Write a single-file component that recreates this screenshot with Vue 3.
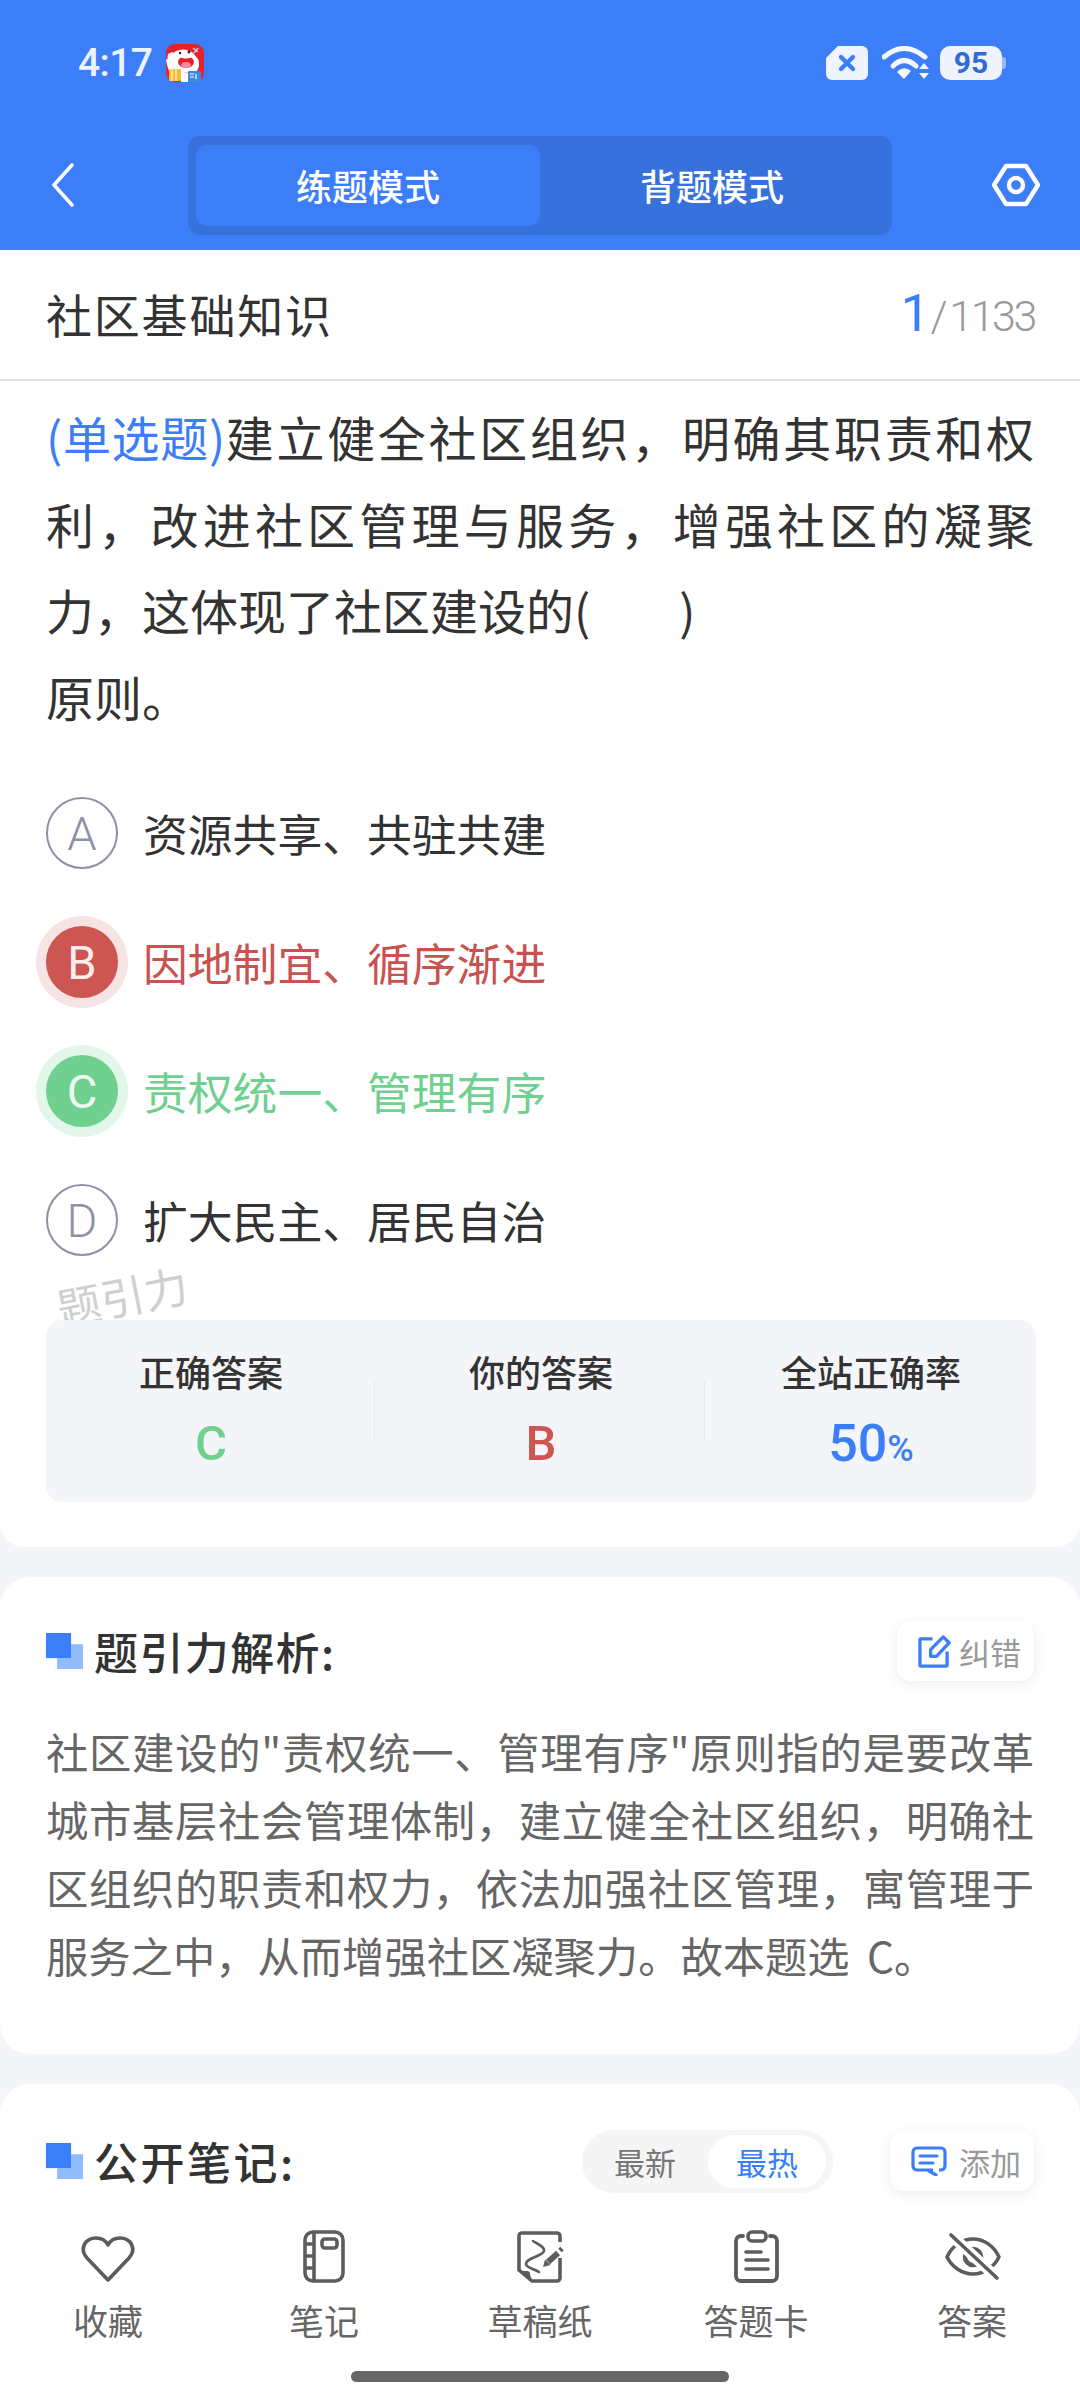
<template>
  <div class="screen">
    <div class="scroll">
      <header class="top">
        <div class="status">
          <div class="status__left">
            <span class="time">4:17</span>
            <svg class="app-icon" viewBox="0 0 38 38" aria-hidden="true">
              <rect width="38" height="38" rx="9" fill="#e8202c" />
              <path d="M0 16 L10 7 Q19 3 27 9 L32 15 Q35 22 30 28 L4 30 Q1 22 0 16Z" fill="#fff" />
              <path d="M2 10 Q8 6 11 11 Q9 18 5 21 Q0 17 2 10Z" fill="#fff" />
              <ellipse cx="20" cy="18" rx="8" ry="6" fill="#e8202c" />
              <ellipse cx="20" cy="21" rx="5" ry="3" fill="#f98aa0" />
              <ellipse cx="20" cy="12" rx="7" ry="2.4" fill="#fff" />
              <circle cx="14" cy="9" r="1.2" fill="#222" />
              <circle cx="23" cy="8" r="1.4" fill="#222" />
              <path d="M27 4 L32 8 M32 4 L28 9" stroke="#c9d4e8" stroke-width="1.4" />
              <rect x="3" y="25" width="12" height="12" rx="1" fill="#fbbc34" />
              <path d="M6 25 V37 M10 25 V37" stroke="#fff" stroke-width="1" />
              <rect x="15" y="29" width="7" height="9" fill="#fff" />
              <rect x="22" y="27" width="13" height="11" rx="1" fill="#3b8be0" />
              <path d="M24 30 H28 M24 33 H28 M30 30 V35" stroke="#fff" stroke-width="1.2" />
            </svg>
          </div>
          <div class="status__right">
            <svg class="sim" viewBox="0 0 44 34" aria-hidden="true">
              <path d="M13 0 H37 a6 6 0 0 1 6 6 V28 a6 6 0 0 1 -6 6 H7 a6 6 0 0 1 -6 -6 V12 Z" fill="#eef3fe" />
              <path d="M16 11 L28 23 M28 11 L16 23" stroke="#3b7ef8" stroke-width="4.4" stroke-linecap="round" />
            </svg>
            <svg class="wifi" viewBox="0 0 48 34" aria-hidden="true">
              <path d="M2 11 Q22 -6 43 11" fill="none" stroke="#f4f7ff" stroke-width="5" stroke-linecap="round" />
              <path d="M11 20 Q22 9 34 20" fill="none" stroke="#f4f7ff" stroke-width="5" stroke-linecap="round" />
              <path d="M15 26 Q22 19 29 25 L22 33 Z" fill="#f4f7ff" />
              <path d="M37 23 L42 17 L47 23 Z M37 27 H47 L42 33 Z" fill="#f4f7ff" />
            </svg>
            <div class="battery">
              <span class="battery__value">95</span>
              <i class="battery__tip"></i>
            </div>
          </div>
        </div>
        <nav class="nav">
          <svg class="nav__back" viewBox="0 0 24 44" aria-hidden="true">
            <path d="M21 2 L3 22 L21 42" fill="none" stroke="#fff" stroke-width="3.6" stroke-linecap="round" stroke-linejoin="round" />
          </svg>
          <div class="modes">
            <button class="mode mode--active">练题模式</button>
            <button class="mode">背题模式</button>
          </div>
          <svg class="nav__settings" viewBox="0 0 48 44" aria-hidden="true">
            <path d="M14 3 H34 L46 22 L34 41 H14 L2 22 Z" fill="none" stroke="#fff" stroke-width="4.4" stroke-linejoin="round" />
            <circle cx="24" cy="22" r="7" fill="none" stroke="#fff" stroke-width="4.4" />
          </svg>
        </nav>
      </header>

      <section class="card card--question">
        <div class="crumb">
          <span class="crumb__title">社区基础知识</span>
          <span class="crumb__count"><b>1</b><em>/</em>1133</span>
        </div>
        <p class="stem">
          <span class="stem__type">(单选题)</span>建立健全社区组织，明确其职责和权利，改进社区管理与服务，增强社区的凝聚力，这体现了社区建设的(&nbsp;&nbsp;&nbsp;&nbsp;&nbsp;&nbsp;&nbsp;&nbsp;&#8202;)<br />原则。
        </p>
        <ul class="options">
          <li
            v-for="opt in options"
            :key="opt.key"
            class="option"
            :class="opt.state ? 'option--' + opt.state : ''"
          >
            <span class="option__badge">{{ opt.key }}</span>
            <span class="option__text">{{ opt.text }}</span>
          </li>
        </ul>
        <span class="watermark">题引力</span>
        <div class="stats">
          <div class="stat">
            <span class="stat__label">正确答案</span>
            <span class="stat__value stat__value--green">C</span>
          </div>
          <div class="stat">
            <span class="stat__label">你的答案</span>
            <span class="stat__value stat__value--red">B</span>
          </div>
          <div class="stat">
            <span class="stat__label">全站正确率</span>
            <span class="stat__value stat__value--blue">50<small>%</small></span>
          </div>
        </div>
      </section>

      <section class="card card--analysis">
        <div class="head">
          <i class="head__mark"></i>
          <h3 class="head__title">题引力解析:</h3>
          <button class="chip">
            <svg class="chip__icon" viewBox="0 0 34 34" aria-hidden="true">
              <path d="M15 4 H3 a1 1 0 0 0 -1 1 V31 a1 1 0 0 0 1 1 H29 a1 1 0 0 0 1 -1 V17" fill="none" stroke="#3b7ef8" stroke-width="3.4" />
              <path d="M13 22 V15 L26 2 L32 8 L19 22 Z" fill="none" stroke="#3b7ef8" stroke-width="3.4" stroke-linejoin="round" />
            </svg>
            纠错
          </button>
        </div>
        <p class="analysis">社区建设的"责权统一、管理有序"原则指的是要改革城市基层社会管理体制，建立健全社区组织，明确社区组织的职责和权力，依法加强社区管理，寓管理于服务之中，从而增强社区凝聚力。故本题选 C。</p>
      </section>

      <section class="card card--notes">
        <div class="head">
          <i class="head__mark"></i>
          <h3 class="head__title">公开笔记:</h3>
          <div class="sort">
            <span class="sort__item">最新</span>
            <span class="sort__item sort__item--active">最热</span>
          </div>
          <button class="chip chip--add">
            <svg class="chip__icon chip__icon--add" viewBox="0 0 36 30" aria-hidden="true">
              <path d="M22 24 H6 a4 4 0 0 1 -4 -4 V6 a4 4 0 0 1 4 -4 H30 a4 4 0 0 1 4 4 V20 a4 4 0 0 1 -4 4 H28" fill="none" stroke="#3b7ef8" stroke-width="3.2" />
              <path d="M18 25 L25 29" fill="none" stroke="#3b7ef8" stroke-width="3.2" stroke-linecap="round" />
              <path d="M9 10 H26 M9 17 H22" fill="none" stroke="#3b7ef8" stroke-width="3.2" stroke-linecap="round" />
            </svg>
            添加
          </button>
        </div>
      </section>
    </div>

    <footer class="tabbar">
      <div class="tabbar__items">
        <div class="tab">
          <svg class="tab__icon" viewBox="0 0 64 56" aria-hidden="true">
            <path d="M32 51 L11 29 C3 20 9 9 20 9 C26 9 30 12 32 16 C34 12 38 9 44 9 C55 9 61 20 53 29 Z" fill="none" stroke="#5c5c5c" stroke-width="3.6" stroke-linejoin="round" />
          </svg>
          <span>收藏</span>
        </div>
        <div class="tab">
          <svg class="tab__icon" viewBox="0 0 64 56" aria-hidden="true">
            <rect x="13" y="3" width="38" height="49" rx="8" fill="none" stroke="#5c5c5c" stroke-width="3.6" />
            <path d="M22 3 V52 M13 15 H22 M13 27 H22 M13 39 H22" fill="none" stroke="#5c5c5c" stroke-width="3.6" />
            <rect x="30" y="10" width="15" height="9" rx="3" fill="none" stroke="#5c5c5c" stroke-width="3.6" />
          </svg>
          <span>笔记</span>
        </div>
        <div class="tab">
          <svg class="tab__icon" viewBox="0 0 64 56" aria-hidden="true">
            <path d="M52 13 V7 a3 3 0 0 0 -3 -3 H14 a3 3 0 0 0 -3 3 V41 L24 52 H49 a3 3 0 0 0 3 -3 V29" fill="none" stroke="#5c5c5c" stroke-width="3.6" />
            <path d="M10 42 H19 a3 3 0 0 1 3 3 L24 53 Z" fill="#5c5c5c" />
            <path d="M25 12 C30 15 37 18 36 22 C35 27 18 29 18 35 C18 39 27 40 31 43" fill="none" stroke="#5c5c5c" stroke-width="2.6" stroke-linecap="round" />
            <path d="M40 33 L50 24" fill="none" stroke="#5c5c5c" stroke-width="6" />
            <path d="M35 38 L37 30.5 L42.5 36 Z" fill="#5c5c5c" />
            <path d="M52 21.5 L54 19.5" fill="none" stroke="#5c5c5c" stroke-width="5" />
          </svg>
          <span>草稿纸</span>
        </div>
        <div class="tab">
          <svg class="tab__icon" viewBox="0 0 64 56" aria-hidden="true">
            <path d="M19 7 H17 a5 5 0 0 0 -5 5 V47 a5 5 0 0 0 5 5 H48 a5 5 0 0 0 5 -5 V12 a5 5 0 0 0 -5 -5 H46" fill="none" stroke="#5c5c5c" stroke-width="3.8" stroke-linecap="round" />
            <rect x="24" y="3" width="18" height="9" rx="4" fill="none" stroke="#5c5c5c" stroke-width="3.6" />
            <path d="M22 23 H37 M22 31 H44 M22 40 H44" fill="none" stroke="#5c5c5c" stroke-width="3.6" stroke-linecap="round" />
          </svg>
          <span>答题卡</span>
        </div>
        <div class="tab">
          <svg class="tab__icon" viewBox="0 0 64 56" aria-hidden="true">
            <path d="M7 28 C12 17 22 10 33 10 C44 10 54 17 59 28 C54 38 44 45 33 45 C22 45 12 38 7 28 Z" fill="none" stroke="#5c5c5c" stroke-width="3.6" stroke-linejoin="round" />
            <circle cx="33" cy="28" r="8" fill="none" stroke="#5c5c5c" stroke-width="4.6" />
            <path d="M11 6 L57 49" stroke="#fff" stroke-width="11" />
            <path d="M11 6 L57 49" stroke="#5c5c5c" stroke-width="3.6" stroke-linecap="round" />
          </svg>
          <span>答案</span>
        </div>
      </div>
      <i class="tabbar__home"></i>
    </footer>
  </div>
</template>

<script setup>
const options = [
  { key: 'A', text: '资源共享、共驻共建' },
  { key: 'B', text: '因地制宜、循序渐进', state: 'wrong' },
  { key: 'C', text: '责权统一、管理有序', state: 'right' },
  { key: 'D', text: '扩大民主、居民自治' }
]
</script>

<style>
html, body { margin: 0; padding: 0; background: #f4f5f8; }
</style>

<style scoped>
.screen { width: 1080px; height: 2400px; display: flex; flex-direction: column; overflow: hidden; background: #f4f5f8; font-family: "Noto Sans CJK SC", "Noto Sans", sans-serif; color: #333; }
.scroll { flex: 1; min-height: 0; overflow: hidden; display: flex; flex-direction: column; gap: 30px; }

/* header */
.top { background: #3b7ef8; height: 250px; margin-bottom: -30px; flex: none; }
.status { height: 136px; padding: 0 78px 0 78px; box-sizing: border-box; display: flex; justify-content: space-between; align-items: flex-start; }
.status__left { display: flex; align-items: center; gap: 14px; padding-top: 41px; }
.time { font-family: Roboto, sans-serif; font-size: 39px; line-height: 44px; font-weight: 500; letter-spacing: -0.6px; color: #edf3ff; }
.app-icon { width: 38px; height: 38px; }
.status__right { display: flex; align-items: center; padding-top: 46px; }
.sim { width: 44px; height: 34px; }
.wifi { width: 48px; height: 34px; margin-left: 13px; }
.battery { position: relative; width: 62px; height: 34px; margin-left: 10px; border-radius: 10px; background: #eef3fe; display: flex; align-items: center; justify-content: center; }
.battery__value { font-family: Roboto, sans-serif; font-size: 30px; font-weight: 700; color: #2f6bd6; line-height: 34px; }
.battery__tip { position: absolute; right: -4px; top: 11px; width: 4px; height: 12px; border-radius: 0 3px 3px 0; background: rgba(238, 243, 254, 0.5); }

.nav { display: flex; align-items: flex-start; height: 99px; }
.nav__back { width: 24px; height: 44px; margin: 27px 0 0 51px; }
.modes { width: 704px; height: 99px; margin-left: 113px; padding: 9px 8px; box-sizing: border-box; display: flex; background: #3671dc; border-radius: 12px; }
.mode { flex: none; width: 344px; border: 0; padding: 0; border-radius: 10px; background: transparent; color: #fff; font-family: inherit; font-size: 36px; font-weight: 500; line-height: 81px; }
.mode--active { background: #3b7ef8; }
.nav__settings { width: 48px; height: 44px; margin: 27px 0 0 100px; }

/* question card */
.card { background: #fff; flex: none; border-radius: 30px; }
.card--question { position: relative; height: 1297px; border-radius: 0 0 24px 24px; }
.crumb { height: 131px; box-sizing: border-box; border-bottom: 2px solid #e2e2e2; padding: 0 45px 3px 46px; display: flex; align-items: center; justify-content: space-between; }
.crumb__title { font-size: 46px; letter-spacing: 1.8px; line-height: 60px; color: #333; }
.crumb__count { font-family: Roboto, sans-serif; font-size: 43px; font-weight: 300; color: #999; display: flex; align-items: baseline; letter-spacing: -2.4px; }
.crumb__count b { font-size: 52px; font-weight: 400; color: #3b7ef8; margin-right: 3px; }
.crumb__count em { font-style: normal; margin-right: 4px; }

.stem { margin: 0; padding: 12px 46px 0; font-size: 48px; line-height: 86.6px; text-align: justify; color: #333; }
.stem__type { color: #3b7ef8; letter-spacing: -2px; }

.options { list-style: none; margin: 58px 0 0; padding: 0; display: flex; flex-direction: column; gap: 57px; }
.option { display: flex; align-items: center; padding-left: 46px; height: 72px; }
.option__badge { width: 72px; height: 72px; box-sizing: border-box; border: 2px solid #8e90a5; border-radius: 50%; display: flex; align-items: center; justify-content: center; font-family: Roboto, sans-serif; font-size: 47px; font-weight: 300; color: #8e90a5; flex: none; }
.option__text { margin-left: 25px; font-size: 44.8px; line-height: 60px; color: #333; }
.option--wrong .option__badge { background: #cd5652; border-color: #cd5652; color: #fdeeee; font-weight: 400; box-shadow: 0 0 0 10px #f6e4e4; }
.option--wrong .option__text { color: #c9514f; }
.option--right .option__badge { background: #6fd08f; border-color: #6fd08f; color: #eefaf2; font-weight: 400; box-shadow: 0 0 0 10px #e2f6ea; }
.option--right .option__text { color: #6fd08f; }

.watermark { position: absolute; left: 56px; top: 1015px; font-size: 44px; line-height: 60px; color: #cfcfcf; transform: rotate(-11deg); }

.stats { position: absolute; left: 46px; right: 44px; top: 1070px; height: 182px; border-radius: 16px; background: #f4f5f8; display: grid; grid-template-columns: repeat(3, 1fr); }
.stat { position: relative; display: flex; flex-direction: column; align-items: center; padding-top: 26px; }
.stat + .stat::before { content: ""; position: absolute; left: -2px; top: 60px; height: 61px; width: 1px; background: #e8e9ed; }
.stat__label { font-size: 36px; line-height: 50px; font-weight: 500; color: #333; }
.stat__value { margin-top: 20px; font-family: Roboto, sans-serif; font-size: 49px; line-height: 56px; font-weight: 500; }
.stat__value--blue { font-size: 52px; }
.stat__value small { font-size: 36px; font-weight: 500; }
.stat__value--green { color: #6fd08f; }
.stat__value--red { color: #cd5652; }
.stat__value--blue { color: #3b7ef8; }

/* analysis + notes */
.card--analysis { height: 477px; padding: 43px 46px 0; box-sizing: border-box; }
.card--notes { height: 200px; padding: 46px 46px 0; box-sizing: border-box; border-radius: 30px 30px 0 0; }
.head { display: flex; align-items: center; height: 62px; }
.head__mark { position: relative; flex: none; width: 37px; height: 36px; margin-right: 11px; background: #90bcfb; clip-path: polygon(0 0, 68% 0, 68% 31%, 100% 31%, 100% 100%, 30% 100%, 30% 70%, 0 70%); }
.head__mark::before { content: ""; position: absolute; left: 0; top: 0; width: 25px; height: 25px; background: #3b7ef8; }
.head__title { margin: 0; font-size: 44px; line-height: 60px; font-weight: 500; color: #333; letter-spacing: 1.4px; }
.chip { margin-left: auto; height: 60px; width: 137px; padding: 0 13px 0 0; border: 0; border-radius: 14px; background: #fff; box-shadow: 0 3px 12px rgba(60, 70, 90, 0.1); display: flex; align-items: center; justify-content: flex-end; font-family: inherit; font-size: 31px; color: #999; }
.chip__icon { width: 33px; height: 33px; margin-right: 8px; }
.chip--add { width: 144px; margin-left: 57px; }
.chip__icon--add { width: 36px; height: 30px; margin-right: 12px; }
.card--notes .head__title { letter-spacing: 2.5px; }
.sort { margin-left: auto; width: 251px; height: 63px; padding: 5px 7px 5px 0; box-sizing: border-box; border-radius: 32px; background: #f5f5f5; display: flex; align-items: center; font-size: 31px; color: #777; }
.sort + .chip { margin-left: 57px; }
.sort__item { width: 126px; text-align: center; line-height: 53px; }
.sort__item--active { width: 118px; background: #fff; color: #3b7ef8; border-radius: 27px; }
.analysis { margin: 35px 0 0; font-size: 42.3px; line-height: 68px; word-spacing: 8px; color: #666; text-align: justify; }

/* bottom bar */
.tabbar { flex: none; height: 195px; background: #fff; position: relative; }
.tabbar__items { display: grid; grid-template-columns: repeat(5, 216px); padding-top: 24px; }
.tab { display: flex; flex-direction: column; align-items: center; font-size: 35px; line-height: 48px; color: #666; }
.tab__icon { width: 64px; height: 56px; margin-bottom: 11px; }
.tabbar__home { position: absolute; left: 351px; bottom: 18px; width: 378px; height: 11px; border-radius: 6px; background: #666; }
</style>
